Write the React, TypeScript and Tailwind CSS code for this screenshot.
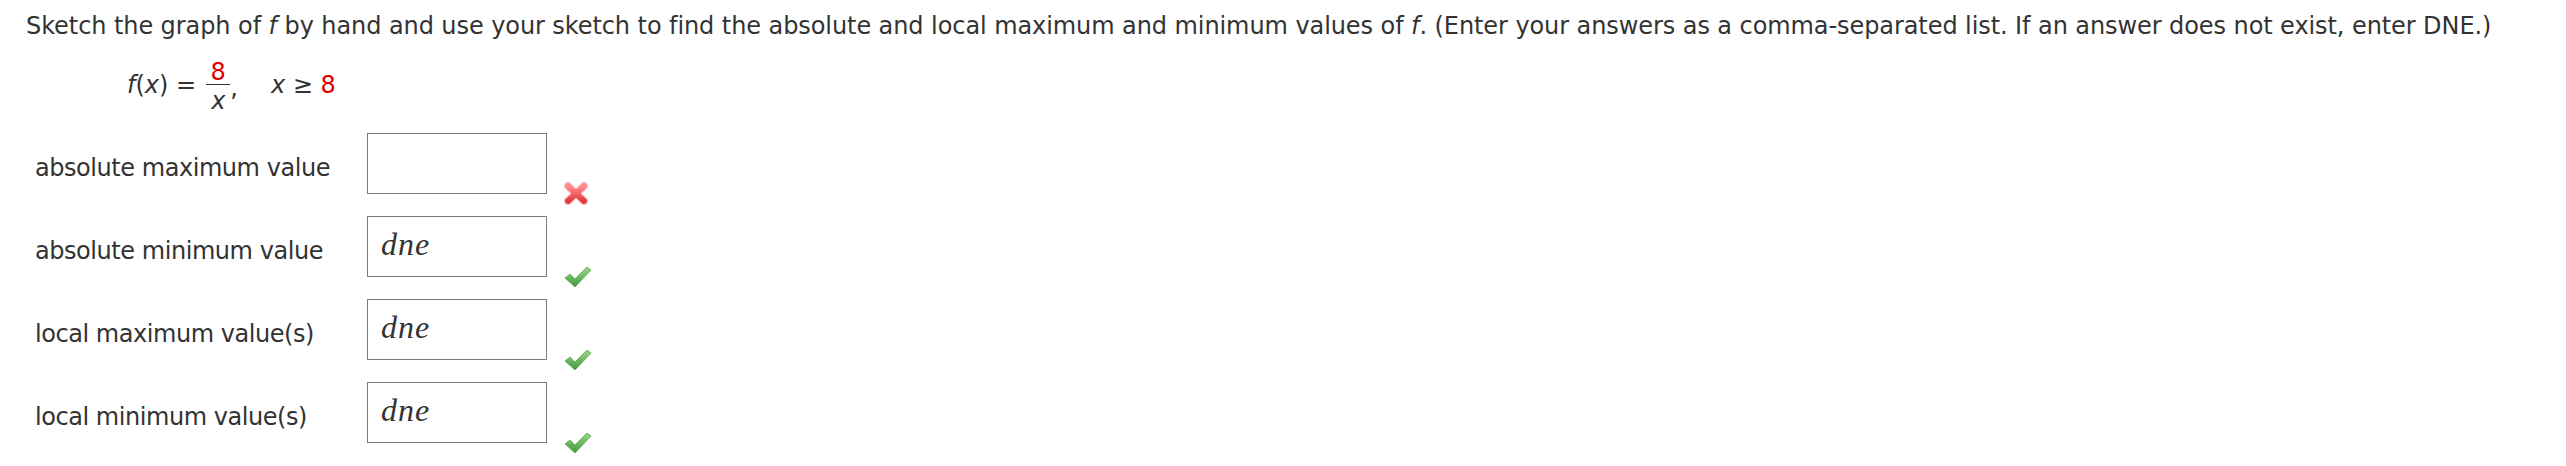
import React from "react";

const sans = "font-['DejaVu_Sans','Verdana',sans-serif]";

const WrongMark = () => (
  <svg width="26" height="25" viewBox="0 0 26 25" aria-hidden="true">
    <defs>
      <linearGradient id="wrongFill" x1="0" y1="0" x2="0" y2="1">
        <stop offset="0" stopColor="#ff8c8c" />
        <stop offset="1" stopColor="#e23b3b" />
      </linearGradient>
    </defs>
    <path d="M5 5 L21 20 M21 5 L5 20" stroke="#f7b3b3" strokeWidth="8.5" strokeLinecap="round" opacity="0.6" />
    <path d="M5 5 L21 20 M21 5 L5 20" stroke="url(#wrongFill)" strokeWidth="6" strokeLinecap="round" />
  </svg>
);

const RightMark = () => (
  <svg width="30" height="24" viewBox="0 0 30 24" aria-hidden="true">
    <defs>
      <linearGradient id="rightFill" x1="0" y1="0" x2="0" y2="1">
        <stop offset="0" stopColor="#9ad88a" />
        <stop offset="1" stopColor="#3f9a37" />
      </linearGradient>
    </defs>
    <path d="M2 13 L7 9 L12 14 L24 2 L28 5 L12 22 Z" fill="url(#rightFill)" stroke="#5aa64f" strokeWidth="0.8" strokeLinejoin="round" />
  </svg>
);

type Row = { label: string; value: string; ok: boolean };

const rows: Row[] = [
  { label: "absolute maximum value", value: "", ok: false },
  { label: "absolute minimum value", value: "dne", ok: true },
  { label: "local maximum value(s)", value: "dne", ok: true },
  { label: "local minimum value(s)", value: "dne", ok: true },
];

export default function App() {
  return (
    <div className={`${sans} min-h-[466px] w-full bg-white text-[24px] leading-[28px] text-[#333]`}>
      <p className="pl-[26px] pt-[12px] whitespace-nowrap tracking-[-0.08px]">
        Sketch the graph of <i>f</i> by hand and use your sketch to find the absolute and local maximum and minimum
        values of <i>f</i>. (Enter your answers as a comma-separated list. If an answer does not exist, enter DNE.)
      </p>

      <div className="mt-[16px] flex items-center pl-[127px]">
        <span>
          <i>f</i>(<i>x</i>) =
        </span>
        <span className="ml-[10px] flex flex-col items-stretch">
          <span className="pt-1 text-center leading-[24px] text-[#dd0000]">8</span>
          <span className="h-px bg-[#333]" />
          <span className="px-[5px] pt-1 text-center leading-[24px]">
            <i>x</i>
          </span>
        </span>
        <span className="self-center pt-[6px]">,</span>
        <span className="ml-[33px]">
          <i>x</i> ≥ <span className="text-[#dd0000]">8</span>
        </span>
      </div>

      <div className="mt-[20px] flex flex-col gap-[22px] pl-[35px]">
        {rows.map((r) => (
          <div key={r.label} className="flex h-[61px] items-start">
            <span className="w-[332px] pt-[21px] whitespace-nowrap tracking-[-0.45px]">{r.label}</span>
            <div className="h-[61px] w-[180px] border border-[#7b7b7b] bg-white pl-[13px] pt-[9px]">
              <span className="font-['Liberation_Serif','Times_New_Roman',serif] text-[32px] italic leading-[36px] tracking-[1px] text-[#333]">
                {r.value}
              </span>
            </div>
            <div className="ml-[16px] flex h-[61px] items-end">
              <div className="translate-y-[12px]">{r.ok ? <RightMark /> : <WrongMark />}</div>
            </div>
          </div>
        ))}
      </div>
    </div>
  );
}
